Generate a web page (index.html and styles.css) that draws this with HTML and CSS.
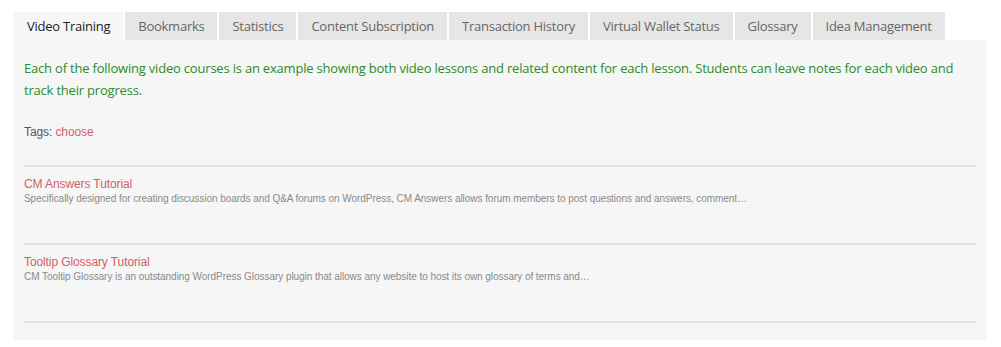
FILE: index.html
```html
<!DOCTYPE html>
<html>
<head>
<meta charset="utf-8">
<link rel="stylesheet" href="styles.css">
</head>
<body>
<div class="wrap">
  <ul class="tabs">
    <li class="tab active">Video Training</li>
    <li class="tab">Bookmarks</li>
    <li class="tab">Statistics</li>
    <li class="tab">Content Subscription</li>
    <li class="tab">Transaction History</li>
    <li class="tab">Virtual Wallet Status</li>
    <li class="tab">Glossary</li>
    <li class="tab">Idea Management</li>
  </ul>
  <div class="panel">
    <p class="intro">Each of the following video courses is an example showing both video lessons and related content for each lesson. Students can leave notes for each video and track their progress.</p>
    <div class="tags">Tags: <a class="tag">choose</a></div>
    <div class="item">
      <a class="title">CM Answers Tutorial</a>
      <div class="desc">Specifically designed for creating discussion boards and Q&amp;A forums on WordPress, CM Answers allows forum members to post questions and answers, comment…</div>
    </div>
    <div class="item">
      <a class="title">Tooltip Glossary Tutorial</a>
      <div class="desc">CM Tooltip Glossary is an outstanding WordPress Glossary plugin that allows any website to host its own glossary of terms and…</div>
    </div>
    <div class="end"></div>
  </div>
</div>
</body>
</html>
```
FILE: styles.css
```css
html, body { margin: 0; padding: 0; background: #fff; }
.wrap { padding: 12px 15px 0 14px; }
.tabs {
  list-style: none; margin: 0; padding: 0;
  display: flex; gap: 2px;
}
.tab {
  font-family: "Open Sans", sans-serif; font-size: 13px; color: #666;
  letter-spacing: -0.25px;
  background: #e6e6e6; height: 28px; line-height: 28px; padding: 0 13px;
  white-space: nowrap;
}
.tab.active { background: #f6f6f6; color: #222; }
.panel {
  background: #f6f6f6; padding: 17px 10px 17px 10px; width: 952px;
}
.intro {
  margin: 0; font-family: "Open Sans", sans-serif; font-size: 13px; line-height: 22px;
  letter-spacing: -0.2px;
  color: #2b8c2b;
}
.tags {
  margin-top: 23px; font-family: "Liberation Sans", Arial, sans-serif; font-size: 12px;
  letter-spacing: -0.1px;
  color: #555; line-height: 16px; padding-bottom: 25px;
}
.tag, .title { color: #d45e63; text-decoration: none; }
.item { border-top: 2px solid #e3e3e3; padding: 9px 0 37px; }
.title { display: block; font-family: "Liberation Sans", Arial, sans-serif; font-size: 12px; line-height: 16px; letter-spacing: -0.1px; }
.desc { font-family: "Liberation Sans", Arial, sans-serif; font-size: 10px; color: #8a8a8a; line-height: 14px; letter-spacing: -0.05px; }
.end { border-top: 2px solid #e3e3e3; }
```
